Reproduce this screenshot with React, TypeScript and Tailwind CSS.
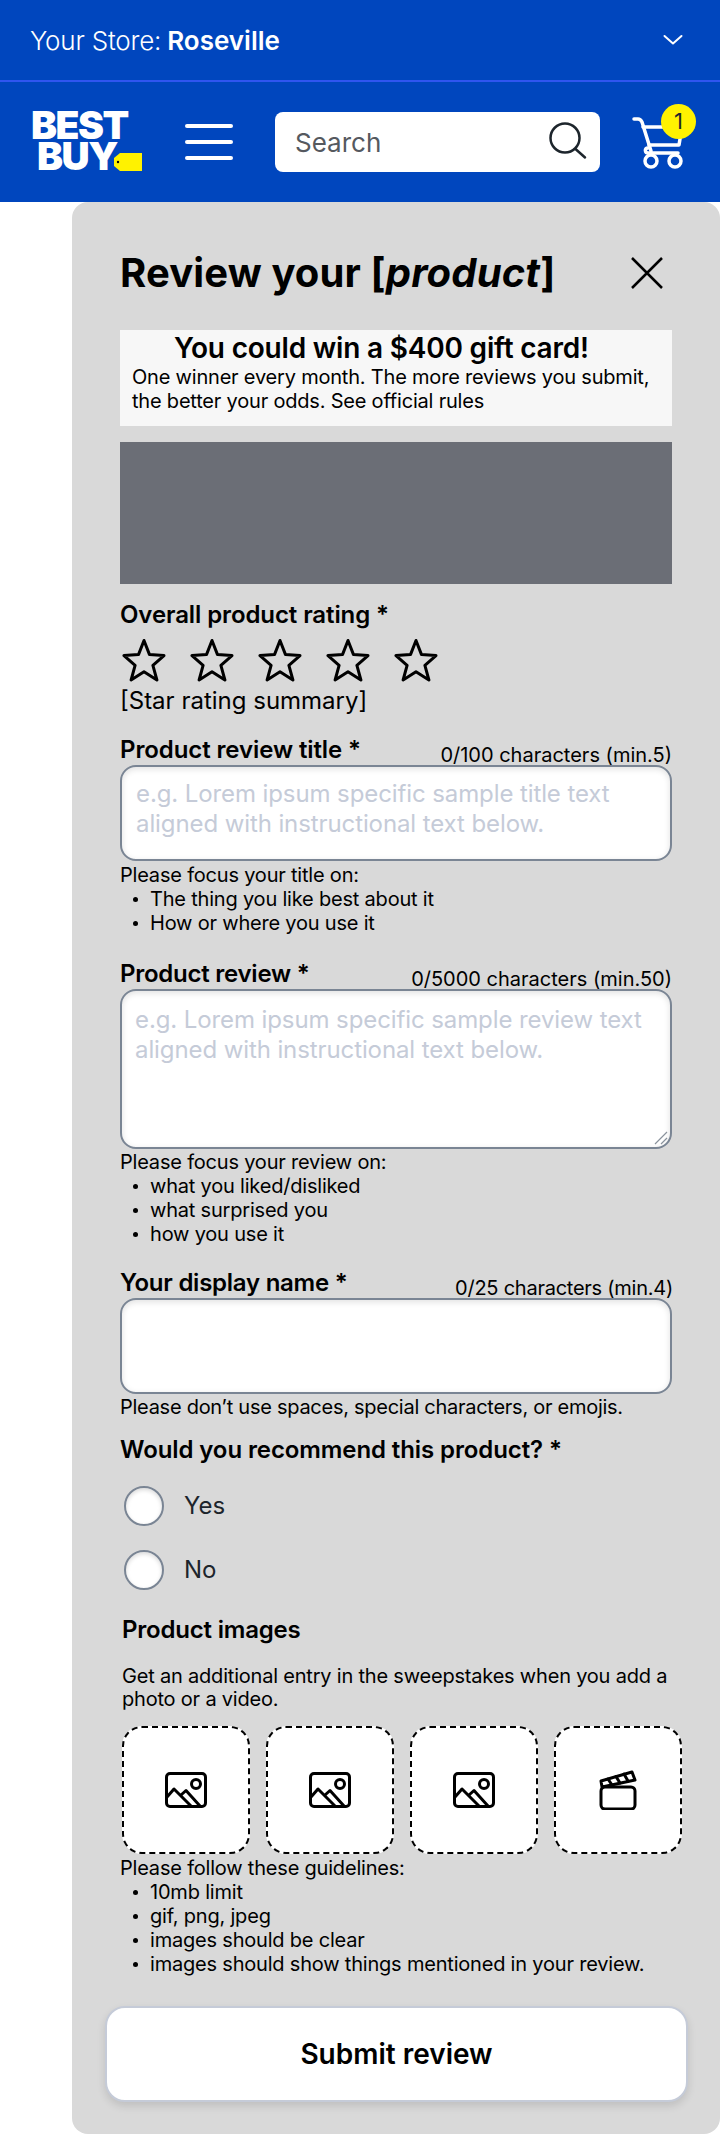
import React from "react";

const Stroke = "#000";

function Star() {
  return (
    <svg width="44" height="44" viewBox="0 0 44 44" fill="none" className="block">
      <path d="M22 2.5 L27.4 16.4 L42 17.6 L30.9 27.3 L34.9 42 L22 33.7 L9.1 42 L13.1 27.3 L2 17.6 L16.6 16.4 Z" stroke={Stroke} strokeWidth="3" strokeLinejoin="round" />
    </svg>
  );
}

function ImageIcon() {
  return (
    <svg width="42" height="36" viewBox="0 0 42 36" fill="none" stroke="#000" strokeWidth="3" strokeLinejoin="round" strokeLinecap="round">
      <rect x="1.5" y="1.5" width="39" height="33" rx="3.5" />
      <circle cx="31" cy="12" r="4.5" />
      <path d="M2 25 L9 17 L26 34" />
      <path d="M16 23 L21 18.5 L35 34" />
    </svg>
  );
}

function ClapIcon() {
  return (
    <svg width="38" height="40" viewBox="0 0 38 40" fill="none" stroke="#000" strokeWidth="3" strokeLinejoin="round" strokeLinecap="round">
      <rect x="2" y="17" width="34" height="22" rx="4" />
      <path d="M2 11 L33 2 L36 10 L3 17 Z" />
      <path d="M9 9 L13 15 M17 6.5 L21 13 M25 4 L29 11" />
    </svg>
  );
}

function Label({ children, counter, tightCounter, tight }: { children: React.ReactNode; counter?: string; tightCounter?: boolean; tight?: boolean }) {
  return (
    <div className="flex justify-between items-end h-[33px]">
      <span className={tight ? "text-[24px] leading-[28px] font-semibold text-black tracking-[-0.25px] pb-[1px]" : "text-[24px] leading-[28px] font-semibold text-black tracking-[-0.1px] pb-[1px]"}>{children}</span>
      {counter && (
        <span className={tightCounter ? "text-[20px] leading-[24px] text-black mb-[-2px] tracking-[-0.25px] mr-[-1px]" : "text-[20px] leading-[24px] text-black mb-[-2px]"}>
          {counter}
        </span>
      )}
    </div>
  );
}

function HelpList({ title, items }: { title: string; items: string[] }) {
  return (
    <div className="text-[20px] leading-[24px] text-black tracking-[-0.2px]">
      <p>{title}</p>
      <ul>
        {items.map((i) => (
          <li key={i} className="flex items-center">
            <span className="w-[5px] h-[5px] rounded-full bg-black ml-[13px] mr-[12px] shrink-0" />
            {i}
          </li>
        ))}
      </ul>
    </div>
  );
}

function Radio({ label }: { label: string }) {
  return (
    <div className="flex items-center h-[64px] pl-[4px]">
      <span className="w-[40px] h-[40px] rounded-full bg-white border-2 border-[#7a8594] shadow-[inset_0_2px_4px_rgba(0,0,0,0.15)]" />
      <span className="ml-[20px] text-[24px] text-[#1d252c]">{label}</span>
    </div>
  );
}

const fieldCls =
  "block w-full rounded-[16px] border-2 border-[#7a8594] bg-white text-[24px] leading-[30px] tracking-[-0.1px] placeholder:text-[#c5cbd8] shadow-[inset_0_2px_6px_rgba(0,0,0,0.12)] outline-none resize-none";

const font = { fontFamily: "Inter, 'Liberation Sans', sans-serif" };

export default function App() {
  return (
    <div className="w-[720px] h-[2134px] bg-white overflow-hidden" style={font}>
      <div className="h-[82px] bg-[#0046be] border-b-2 border-[#2f55f0] flex items-center justify-between pl-[30px] pr-[37px]">
        <span className="text-[26px] text-white font-light tracking-[-0.2px]">
          Your Store:<span className="font-semibold ml-[6px] tracking-normal">Roseville</span>
        </span>
        <svg width="20" height="12" viewBox="0 0 20 12" fill="none" stroke="#fff" strokeWidth="2" strokeLinecap="round" strokeLinejoin="round">
          <path d="M1.5 2 L10 9.5 L18.5 2" />
        </svg>
      </div>

      <div className="h-[120px] bg-[#0046be] flex items-center pl-[31px]">
        <div className="relative w-[111px] h-[64px] -mt-[2px] text-white font-black text-[39px] leading-[31px] tracking-[-1.5px]">
          <div>BEST</div>
          <div className="pl-[6px]">BUY</div>
          <svg className="absolute left-[83px] top-[44px]" width="29" height="20" viewBox="0 0 29 20">
            <path d="M6 0 H28 V18 H6 L0 13 V5 Z" fill="#fff200" />
            <circle cx="4" cy="9" r="1.2" fill="#000" />
          </svg>
        </div>
        <div className="ml-[43px] w-[48px] flex flex-col gap-[12px]">
          <span className="block h-[4px] rounded-full bg-white" />
          <span className="block h-[4px] rounded-full bg-white" />
          <span className="block h-[4px] rounded-full bg-white" />
        </div>
        <div className="ml-[42px] w-[325px] h-[60px] bg-white rounded-[8px] flex items-center justify-between pl-[20px] pr-[12px]">
          <span className="text-[26px] text-[#55595f]">Search</span>
          <svg width="40" height="40" viewBox="0 0 40 40" fill="none" stroke="#1d252c" strokeWidth="2.5" strokeLinecap="round">
            <circle cx="17" cy="16" r="14.5" />
            <path d="M27.5 27 L37 35.5" />
          </svg>
        </div>
        <div className="relative ml-[32px] w-[54px] h-[56px]">
          <svg width="54" height="56" viewBox="0 0 54 56" fill="none" stroke="#fff" strokeWidth="3.5" strokeLinecap="round" strokeLinejoin="round">
            <path d="M2 5 H6 C8 5 9 6 10 8 L19 37" />
            <path d="M11 13 H50 L47 31 H17" />
            <path d="M46 39 H16 C13 39 12 34 16 34" />
            <circle cx="19" cy="47" r="6" />
            <circle cx="43" cy="47" r="6" />
          </svg>
          <span className="absolute left-[29px] top-[-10px] w-[35px] h-[35px] rounded-full bg-[#fff200] flex items-center justify-center text-[22px] text-[#1d252c]">1</span>
        </div>
      </div>

      <div className="ml-[72px] h-[1932px] bg-[#d9d9d9] rounded-[16px] pl-[48px] pr-[48px]">
        <div className="flex items-center justify-between h-[128px] pt-[14px] pr-[9px]">
          <h1 className="text-[40px] font-bold text-black tracking-[0.13px]">
            Review your [<em>product</em>]
          </h1>
          <svg width="32" height="32" viewBox="0 0 32 32" fill="none" stroke="#000" strokeWidth="2.5">
            <path d="M1 1 L31 31 M31 1 L1 31" />
          </svg>
        </div>

        <div className="h-[96px] bg-[#f7f7f7] px-[12px] text-black">
          <div className="text-[28px] leading-[32px] font-semibold pl-[42px] pt-[2px] tracking-[-0.2px]">You could win a $400 gift card!</div>
          <p className="text-[20px] leading-[24px] pt-[1px] tracking-[-0.2px]">One winner every month. The more reviews you submit, the better your odds. See official rules</p>
        </div>

        <div className="mt-[16px] h-[142px] bg-[#6b6e76]" />

        <div className="mt-[13px]">
          <Label>Overall product rating *</Label>
        </div>
        <div className="flex gap-[24px] mt-[8px] pl-[2px]">
          <Star />
          <Star />
          <Star />
          <Star />
          <Star />
        </div>
        <div className="text-[24px] leading-[30px] text-black mt-[4px]">[Star rating summary]</div>

        <div className="mt-[16px]">
          <Label counter="0/100 characters (min.5)">Product review title *</Label>
        </div>
        <textarea readOnly rows={2} className={fieldCls + " h-[96px] px-[14px] py-[12px]"} placeholder="e.g. Lorem ipsum specific sample title text aligned with instructional text below." />
        <div className="mt-[2px]">
          <HelpList title="Please focus your title on:" items={["The thing you like best about it", "How or where you use it"]} />
        </div>

        <div className="mt-[21px]">
          <Label tight counter="0/5000 characters (min.50)">Product review *</Label>
        </div>
        <div className="relative">
          <textarea readOnly className={fieldCls + " h-[160px] pl-[13px] pr-[14px] py-[14px]"} placeholder="e.g. Lorem ipsum specific sample review text aligned with instructional text below." />
          <svg className="absolute right-[4px] bottom-[4px]" width="14" height="14" viewBox="0 0 14 14" fill="none" stroke="#8a929c" strokeWidth="1.2">
            <path d="M1 13 L13 1 M7 13 L13 7" />
          </svg>
        </div>
        <div className="mt-[1px]">
          <HelpList title="Please focus your review on:" items={["what you liked/disliked", "what surprised you", "how you use it"]} />
        </div>

        <div className="mt-[19px]">
          <Label tight tightCounter counter="0/25 characters (min.4)">Your display name *</Label>
        </div>
        <div className={fieldCls + " h-[96px]"} />
        <p className="text-[20px] leading-[24px] text-black mt-[1px] tracking-[-0.27px]">Please don’t use spaces, special characters, or emojis.</p>

        <div className="mt-[13px]">
          <Label>Would you recommend this product? *</Label>
        </div>
        <div className="mt-[9px]">
          <Radio label="Yes" />
          <Radio label="No" />
        </div>

        <div className="pl-[2px] mt-[13px] text-[24px] leading-[30px] font-semibold text-black tracking-[-0.2px]">Product images</div>
        <p className="pl-[2px] mt-[20px] text-[20px] leading-[23px] text-black tracking-[-0.2px]">Get an additional entry in the sweepstakes when you add a photo or a video.</p>

        <div className="flex gap-[16px] mt-[15px] ml-[2px] w-[560px]">
          {[0, 1, 2, 3].map((i) => (
            <div key={i} className="w-[128px] h-[128px] shrink-0 bg-white rounded-[20px] border-2 border-dashed border-black flex items-center justify-center">
              {i < 3 ? <ImageIcon /> : <ClapIcon />}
            </div>
          ))}
        </div>

        <div className="mt-[2px]">
          <HelpList title="Please follow these guidelines:" items={["10mb limit", "gif, png, jpeg", "images should be clear", "images should show things mentioned in your review."]} />
        </div>

        <button className="block mt-[30px] -ml-[15px] w-[583px] h-[96px] bg-white border-2 border-[#c5cbd8] rounded-[20px] text-[28px] font-semibold text-black shadow-[0_4px_8px_rgba(0,0,0,0.12)]">
          Submit review
        </button>
      </div>
    </div>
  );
}
